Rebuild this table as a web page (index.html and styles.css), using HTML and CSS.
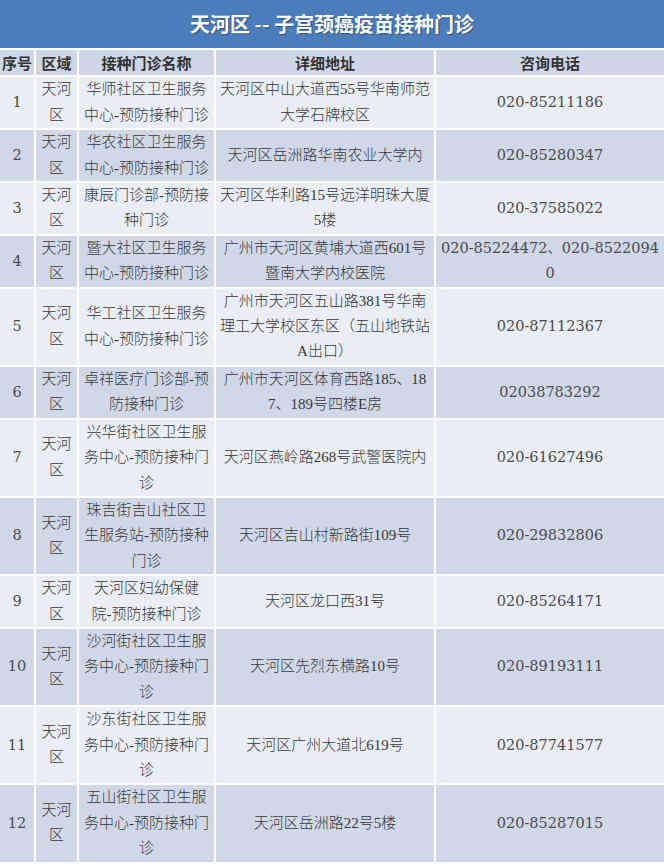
FILE: index.html
```html
<!DOCTYPE html>
<html lang="zh-CN">
<head>
<meta charset="utf-8">
<title>天河区 -- 子宫颈癌疫苗接种门诊</title>
<link rel="stylesheet" href="styles.css">
</head>
<body>
<div class="title">天河区 -- 子宫颈癌疫苗接种门诊</div>
<table class="clinics">
  <colgroup>
    <col class="c-no"><col class="c-area"><col class="c-name"><col class="c-addr"><col class="c-tel">
  </colgroup>
  <thead>
    <tr><th>序号</th><th>区域</th><th>接种门诊名称</th><th>详细地址</th><th>咨询电话</th></tr>
  </thead>
  <tbody>
    <tr class="odd"><td class="num">1</td><td>天河<br>区</td><td>华师社区卫生服务<br>中心-预防接种门诊</td><td>天河区中山大道西55号华南师范<br>大学石牌校区</td><td class="num">020-85211186</td></tr>
    <tr class="even"><td class="num">2</td><td>天河<br>区</td><td>华农社区卫生服务<br>中心-预防接种门诊</td><td>天河区岳洲路华南农业大学内</td><td class="num">020-85280347</td></tr>
    <tr class="odd"><td class="num">3</td><td>天河<br>区</td><td>康辰门诊部-预防接<br>种门诊</td><td>天河区华利路15号远洋明珠大厦<br>5楼</td><td class="num">020-37585022</td></tr>
    <tr class="even"><td class="num">4</td><td>天河<br>区</td><td>暨大社区卫生服务<br>中心-预防接种门诊</td><td>广州市天河区黄埔大道西601号<br>暨南大学内校医院</td><td class="num">020-85224472、020-8522094<br>0</td></tr>
    <tr class="odd"><td class="num">5</td><td>天河<br>区</td><td>华工社区卫生服务<br>中心-预防接种门诊</td><td>广州市天河区五山路381号华南<br>理工大学校区东区（五山地铁站<br>A出口）</td><td class="num">020-87112367</td></tr>
    <tr class="even"><td class="num">6</td><td>天河<br>区</td><td>卓祥医疗门诊部-预<br>防接种门诊</td><td>广州市天河区体育西路185、18<br>7、189号四楼E房</td><td class="num">02038783292</td></tr>
    <tr class="odd"><td class="num">7</td><td>天河<br>区</td><td>兴华街社区卫生服<br>务中心-预防接种门<br>诊</td><td>天河区燕岭路268号武警医院内</td><td class="num">020-61627496</td></tr>
    <tr class="even"><td class="num">8</td><td>天河<br>区</td><td>珠吉街吉山社区卫<br>生服务站-预防接种<br>门诊</td><td>天河区吉山村新路街109号</td><td class="num">020-29832806</td></tr>
    <tr class="odd"><td class="num">9</td><td>天河<br>区</td><td>天河区妇幼保健<br>院-预防接种门诊</td><td>天河区龙口西31号</td><td class="num">020-85264171</td></tr>
    <tr class="even"><td class="num">10</td><td>天河<br>区</td><td>沙河街社区卫生服<br>务中心-预防接种门<br>诊</td><td>天河区先烈东横路10号</td><td class="num">020-89193111</td></tr>
    <tr class="odd"><td class="num">11</td><td>天河<br>区</td><td>沙东街社区卫生服<br>务中心-预防接种门<br>诊</td><td>天河区广州大道北619号</td><td class="num">020-87741577</td></tr>
    <tr class="even"><td class="num">12</td><td>天河<br>区</td><td>五山街社区卫生服<br>务中心-预防接种门<br>诊</td><td>天河区岳洲路22号5楼</td><td class="num">020-85287015</td></tr>
  </tbody>
</table>
</body>
</html>
```
FILE: styles.css
```css
html, body {
  margin: 0;
  padding: 0;
  background: #ffffff;
}

.title {
  height: 48px;
  background: #4a7dba;
  color: #ffffff;
  font-family: "Noto Sans CJK SC", sans-serif;
  font-weight: bold;
  font-size: 20px;
  line-height: 48px;
  text-align: center;
  text-shadow: 1px 1px 1px rgba(0, 0, 0, 0.35);
}

.clinics {
  width: 664px;
  border-collapse: collapse;
  table-layout: fixed;
  font-family: "Liberation Serif", "Noto Sans CJK SC", sans-serif;
  font-size: 15px;
  color: #383838;
}

.c-no { width: 35px; }
.c-area { width: 43px; }
.c-name { width: 137px; }
.c-addr { width: 220px; }
.c-tel { width: 229px; }

.clinics th,
.clinics td {
  border: 2px solid #ffffff;
  padding: 0 1px;
  line-height: 25.4px;
  text-align: center;
  vertical-align: middle;
  white-space: nowrap;
  overflow: visible;
}

.clinics td {
  font-weight: 300;
}

.clinics tr > :first-child { border-left: 0; }
.clinics tr > :last-child { border-right: 0; }

.clinics th {
  background: #cfd7e7;
  font-family: "Noto Sans CJK SC", sans-serif;
  font-weight: bold;
  font-size: 15px;
  color: #333333;
}

.clinics tr.odd td { background: #e9edf4; }
.clinics tr.even td { background: #d0d8e8; }

.clinics td.num {
  font-family: "DejaVu Serif", "Noto Sans CJK SC", serif;
  font-size: 14.5px;
  font-weight: normal;
  color: #4a4a4a;
}
```
